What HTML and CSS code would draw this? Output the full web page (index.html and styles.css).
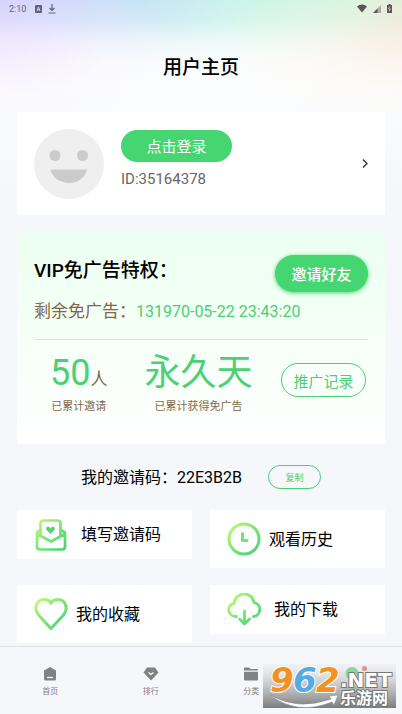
FILE: index.html
```html
<!DOCTYPE html>
<html lang="zh-CN">
<head>
<meta charset="utf-8">
<meta name="viewport" content="width=device-width, initial-scale=1">
<title>用户主页</title>
<link rel="stylesheet" href="styles.css">
</head>
<body>
<svg class="defs" width="0" height="0" aria-hidden="true">
  <defs>
    <linearGradient id="lime" gradientUnits="userSpaceOnUse" x1="2" y1="2" x2="32" y2="32">
      <stop offset="0" stop-color="#c3fb6e"/>
      <stop offset="0.5" stop-color="#7be475"/>
      <stop offset="1" stop-color="#45d277"/>
    </linearGradient>
  </defs>
</svg>
<div class="page">
  <div class="status">
    <span class="clock">2:10</span>
    <svg width="7" height="8" viewBox="0 0 7 8"><rect width="7" height="8" rx="1" fill="#5c6475"/><path d="M2 6 3.500 2 5 6M2.500 4.800h2" fill="none" stroke="#dbe6f8" stroke-width="0.900"/></svg>
    <svg width="8" height="10" viewBox="0 0 8 10"><path d="M4 0v6M1.500 4 4 6.500 6.500 4M0.500 9h7" fill="none" stroke="#5c6475" stroke-width="1.200"/></svg>
    <span class="spacer"></span>
    <svg width="10" height="9" viewBox="0 0 10 9"><path d="M0 2.500Q5-1.500 10 2.500L5 8.500Z" fill="#5d5558"/></svg>
    <svg width="8" height="8" viewBox="0 0 8 8"><path d="M8 0v8H0Z" fill="#b5a9aa"/><path d="M4.500 3.500V8H0Z" fill="#5d5558"/></svg>
    <svg width="5" height="9" viewBox="0 0 5 9"><path d="M0 1h1.500V0h2v1H5v8H0Z" fill="#5d5558"/><path d="M3 2.500 1.500 5h2L2 7.500" fill="none" stroke="#f3cfd5" stroke-width="0.800"/></svg>
  </div>
  <h1 class="title">用户主页</h1>

  <main class="content">
    <section class="card profile">
      <svg width="70" height="70" viewBox="0 0 70 70"><circle cx="35" cy="35" r="35" fill="#efefef"/><circle cx="21" cy="26.500" r="5.500" fill="#cbcbcb"/><circle cx="48.500" cy="26.500" r="5.500" fill="#cbcbcb"/><path d="M16.500 40.500H53C51 49 43.500 54 35 54S18.500 49 16.500 40.500Z" fill="#cbcbcb"/></svg>
      <div class="who">
        <button class="pill login" type="button">点击登录</button>
        <span class="uid">ID:35164378</span>
      </div>
      <a href="#profile" aria-label="个人资料"><svg width="6" height="9" viewBox="0 0 6 9"><path d="M1 0.500 5 4.500 1 8.500" fill="none" stroke="#222" stroke-width="1.200"/></svg></a>
    </section>

    <section class="card vip">
      <div class="vip-head">
        <div class="vip-text">
          <h2>VIP免广告特权：</h2>
          <p class="remain">剩余免广告：<span class="date">131970-05-22 23:43:20</span></p>
        </div>
        <button class="pill invite" type="button">邀请好友</button>
      </div>
      <div class="stats">
        <div class="stat">
          <div class="big">50<span class="unit">人</span></div>
          <div class="label">已累计邀请</div>
        </div>
        <div class="stat">
          <div class="big">永久天</div>
          <div class="label">已累计获得免广告</div>
        </div>
        <button class="pill outline record" type="button">推广记录</button>
      </div>
    </section>

    <div class="code">
      <span>我的邀请码：22E3B2B</span>
      <button class="pill outline copy" type="button">复制</button>
    </div>

    <div class="tiles">
      <a class="tile short" href="#code">
        <svg width="34" height="34" viewBox="0 0 34 34" fill="none" stroke="url(#lime)" stroke-width="2.700" stroke-linejoin="round" stroke-linecap="round"><path d="M6.500 17V5.500Q6.500 2.500 9.500 2.500H23.500Q26.500 2.500 26.500 5.500V17"/><path d="M6 12 3 14.500V28.500Q3 31.500 6 31.500H28Q31 31.500 31 28.500V14.500L27 12M3 16 17 23.500 31 16"/><path d="M16.500 16 12.500 12C11 9 15 7.500 16.500 10.500 18 7.500 22 9 20.500 12Z" fill="#50d56e" stroke="none"/></svg>
        <span>填写邀请码</span>
      </a>
      <a class="tile" href="#history">
        <svg width="34" height="34" viewBox="0 0 34 34" fill="none" stroke="url(#lime)" stroke-width="3" stroke-linecap="round" stroke-linejoin="round"><circle cx="17" cy="17" r="15"/><path d="M15.500 11.500V18.500H20" stroke="#78df79"/></svg>
        <span>观看历史</span>
      </a>
      <a class="tile" href="#favorites">
        <svg width="34" height="34" viewBox="0 0 34 34" fill="none" stroke="url(#lime)" stroke-width="3" stroke-linejoin="round"><path d="M17 31.500 4.500 18C-1 11 3 2.500 10 2.500 13.500 2.500 16 4 17 6.500 18 4 20.500 2.500 24 2.500 31 2.500 35 11 29.500 18Z"/></svg>
        <span>我的收藏</span>
      </a>
      <a class="tile short" href="#downloads">
        <svg width="34" height="34" viewBox="0 0 34 34" fill="none" stroke="url(#lime)" stroke-width="2.800" stroke-linecap="round" stroke-linejoin="round"><path d="M9.500 23.500H8C0 22.500-.5 11.500 7 10.500 8 -1.500 25-2.500 27 9.500 35 11 34.500 22.500 26.500 23.500"/><path d="M17.500 18V30.500M12.500 26 17.500 31 22.500 26"/></svg>
        <span>我的下载</span>
      </a>
    </div>
  </main>

  <nav class="tabs">
    <a href="#home"><svg width="16" height="14" viewBox="0 0 16 14"><path d="M8 0 14 3.500V12Q14 13.500 12.500 13.500H3.500Q2 13.500 2 12V3.500Z" fill="#828282"/><path d="M5 10.500h6" stroke="#fff" stroke-width="1.200"/></svg>首页</a>
    <a href="#rank"><svg width="16" height="14" viewBox="0 0 16 14"><path d="M4 0.500H12L15.500 5.500 8 13.500 0.500 5.500Z" fill="#828282"/><path d="M5.500 5.500 8 7.500 10.500 5.500" fill="none" stroke="#fff" stroke-width="1.200"/></svg>排行</a>
    <a href="#category"><svg width="16" height="14" viewBox="0 0 16 14"><path d="M1 1.500Q1 .5 2 .5H6L7.500 2H14Q15 2 15 3V3.500H1ZM1 4.800H15V12.500Q15 13.500 14 13.500H2Q1 13.500 1 12.500Z" fill="#828282"/></svg>分类</a>
    <a class="active" href="#mine"><svg width="16" height="14" viewBox="0 0 16 14"><circle cx="8" cy="6.500" r="6.500" fill="#5fd375"/></svg>我的<i class="dot"></i></a>
    <svg class="mark" width="133" height="44" viewBox="0 0 133 44">
      <defs>
        <linearGradient id="plate" x2="0" y2="1"><stop offset="0" stop-color="#e4e4e5" stop-opacity="0.300"/><stop offset="0.500" stop-color="#aaaaab" stop-opacity="0.650"/><stop offset="1" stop-color="#757575" stop-opacity="0.950"/></linearGradient>
      </defs>
      <rect width="133" height="44" fill="url(#plate)"/>
      <path d="M7 31Q35 47 68 35L66 32 75 31 71 41 69 38Q34 52 7 31Z" fill="#fff" stroke="#8b8b8b" stroke-width="0.600"/>
      <g class="digits"><text x="7" y="28" fill="#f39224">9</text><text x="30" y="28" fill="#55ace2">6</text><text x="53" y="28" fill="#f39224">2</text></g>
      <text class="net" x="77" y="23">.NET</text>
      <text class="site" x="77" y="40">乐游网</text>
    </svg>
  </nav>
</div>
</body>
</html>
```
FILE: styles.css
```css
* {
  box-sizing: border-box;
}

body {
  margin: 0;
  background: #f5f7fb;
  color: #000;
  font-family: Roboto, "Noto Sans CJK SC", sans-serif;
}

h1, h2, p {
  margin: 0;
  font-weight: 500;
}

a {
  color: inherit;
  text-decoration: none;
}

svg {
  display: block;
  flex: none;
}

.defs {
  position: absolute;
}

.page {
  display: flex;
  flex-direction: column;
  min-height: 100vh;
  background:
    radial-gradient(ellipse 45% 80px at 0 50px, rgba(240, 222, 255, 0.5), rgba(246, 238, 255, 0.2) 60%, rgba(250, 245, 255, 0)) no-repeat,
    radial-gradient(ellipse 45% 80px at 100% 45px, rgba(255, 232, 216, 0.5), rgba(255, 243, 228, 0.2) 60%, rgba(255, 250, 240, 0)) no-repeat,
    linear-gradient(rgba(253, 253, 254, 0), rgba(253, 253, 254, 0.15) 20px, rgba(253, 253, 254, 0.7) 42px, rgba(253, 253, 254, 0.93) 60px, #fcfdfe 85px, #f5f7fb 190px),
    linear-gradient(100deg, #d0ccfd, #c8e3f6 25%, #ccf5ea 46%, #d4f5de 68%, #e8dfd0 86%, #f8c6ce 96%);
}

.status {
  display: flex;
  align-items: center;
  gap: 4px;
  height: 17px;
  padding: 0 10px 0 9px;
  color: #5c6475;
  font-size: 9px;
}

.clock {
  margin-right: 5px;
}

.status svg + svg {
  margin-left: 2px;
}

.spacer {
  flex: 1;
}

.title {
  padding: 37px 0 30px;
  text-align: center;
  font-size: 19px;
  line-height: 28px;
}

.content {
  padding: 0 17px 3px;
}

.card {
  background: #fff;
  border-radius: 2px;
}

.profile {
  display: flex;
  align-items: center;
  height: 103px;
  padding: 0 17px;
}

.who {
  display: flex;
  flex: 1;
  flex-direction: column;
  align-items: flex-start;
  gap: 8px;
  margin-left: 17px;
  padding-bottom: 10px;
}

.pill {
  padding: 0;
  border: 0;
  border-radius: 20px;
  background: #46d671;
  color: #fff;
  font-family: inherit;
  font-size: 15px;
}

.login {
  width: 111px;
  height: 32px;
}

.uid {
  color: #666;
  font-size: 15px;
  line-height: 18px;
}

.vip {
  height: 212px;
  margin-top: 17px;
  padding: 23px 17px 0;
  background: linear-gradient(#ecfff0, #fff);
}

.vip-head {
  display: flex;
  align-items: flex-start;
  justify-content: space-between;
  height: 85px;
  border-bottom: 1px solid #eedccb;
}

.vip-text {
  flex: 1;
  min-width: 0;
}

.vip-text h2 {
  font-size: 19px;
  line-height: 32px;
}

.remain {
  margin-top: 12px;
  color: #826848;
  font-size: 17px;
  font-weight: 400;
  line-height: 24px;
  white-space: nowrap;
}

.date {
  color: #4bcf74;
  font-size: 16px;
}

.invite {
  flex: none;
  width: 93px;
  height: 37px;
  box-shadow: 0 1px 4px #46d671;
  font-weight: 500;
}

.stats {
  display: flex;
  align-items: flex-start;
  padding: 9px 2px 0 16px;
}

.stat {
  text-align: center;
}

.stat + .stat {
  margin-left: 37px;
}

.big {
  height: 46px;
  color: #4bd174;
  font-size: 36px;
  line-height: 48px;
}

.unit {
  color: #826848;
  font-size: 17px;
  line-height: 1;
}

.label {
  margin-top: 4px;
  color: #826848;
  font-size: 11px;
  line-height: 16px;
}

.outline {
  border: 1px solid #4bcf74;
  background: transparent;
  color: #4bcf74;
}

.record {
  width: 85px;
  height: 34px;
  margin: 14px 0 0 auto;
}

.code {
  display: flex;
  align-items: center;
  justify-content: center;
  gap: 26px;
  height: 66px;
  font-size: 16px;
}

.code span {
  padding-bottom: 2px;
}

.copy {
  width: 53px;
  height: 24px;
  font-size: 9px;
}

.tiles {
  display: grid;
  grid-template-columns: 1fr 1fr;
  align-items: start;
  gap: 17px 18px;
}

.tile {
  display: flex;
  align-items: center;
  gap: 8px;
  height: 58px;
  padding-left: 17px;
  background: #fff;
  font-size: 16px;
}

.tile span {
  padding-bottom: 3px;
}

.short {
  gap: 13px;
  height: 49px;
}

.tabs {
  position: relative;
  display: grid;
  grid-template-columns: repeat(4, 1fr);
  height: 68px;
  margin-top: auto;
  padding-top: 20px;
  border-top: 1px solid #dfe1e4;
  background: #f5f7fb;
}

.tabs a {
  position: relative;
  display: flex;
  flex-direction: column;
  align-items: center;
  gap: 5px;
  color: #828282;
  font-size: 8px;
  line-height: 12px;
}

.tabs .active {
  color: #58c274;
}

.dot {
  position: absolute;
  top: -1px;
  left: calc(50% + 10px);
  width: 5px;
  height: 5px;
  border-radius: 50%;
  background: #f26a5c;
}

.mark {
  position: absolute;
  right: 6px;
  bottom: 6px;
  overflow: visible;
}

.digits {
  font: italic bold 34px "DejaVu Sans", sans-serif;
  stroke: #fff;
  stroke-width: 2px;
  paint-order: stroke;
}

.net {
  font: bold 20px "DejaVu Sans", sans-serif;
  fill: #fff;
  stroke: #777;
  stroke-width: 2px;
  paint-order: stroke;
}

.site {
  font: bold 16px "Noto Sans CJK SC", sans-serif;
  fill: #fff;
  stroke: #777;
  stroke-width: 2px;
  paint-order: stroke;
}
```
